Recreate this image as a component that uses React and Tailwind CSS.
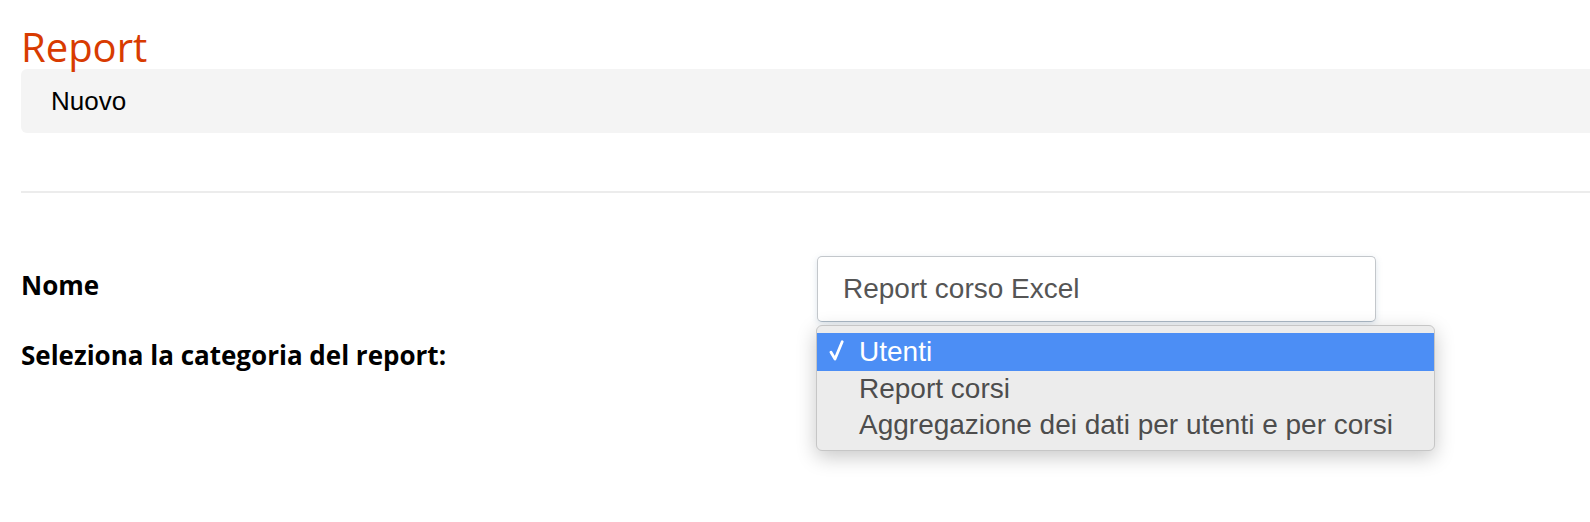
export default function App() {
  return (
    <div className="min-h-[522px] w-[1590px] overflow-hidden bg-white pl-[21px] pt-[25px]" style={{ fontFamily: '"Open Sans", sans-serif' }}>
      <h1 className="text-[40px] leading-[44px] font-normal text-[#d83b01]">Report</h1>
      <div className="flex h-[64px] items-center rounded-l-[6px] bg-[#f4f4f4] pl-[30px]">
        <span className="text-[26px] text-black" style={{ fontFamily: '"Liberation Sans", Arial, sans-serif' }}>Nuovo</span>
      </div>
      <div className="mt-[58px] h-[2px] bg-[#ececec]" />

      <div className="mt-[63px] flex">
        <div className="w-[796px] pt-[13px] text-[26px] leading-[32px] font-bold text-black">Nome</div>
        <div
          className="flex h-[66px] w-[559px] items-center rounded-[5px] border border-[#c3c7cb] border-b-[#aab8c4] bg-white pl-[25px] text-[28px] text-[#555555] shadow-[0_2px_6px_rgba(120,150,180,0.25)]"
          style={{ fontFamily: '"Liberation Sans", Arial, sans-serif' }}
        >
          Report corso Excel
        </div>
      </div>

      <div className="mt-[17px] flex">
        <div className="w-[795px] text-[26px] leading-[32px] font-bold text-black">Seleziona la categoria del report:</div>
        <div className="relative h-[40px] w-[619px]">
          <div
            className="absolute left-0 top-[-14px] w-[619px] rounded-[6px] border border-[#c6c6c6] bg-[#ececec] pt-[7px] pb-[7px] text-[28px] text-[#4d4d4d] shadow-[0_6px_20px_rgba(0,0,0,0.22)]"
            style={{ fontFamily: '"Liberation Sans", Arial, sans-serif' }}
          >
            <div className="relative flex h-[38px] items-center bg-[#4c8ef5] pl-[42px] text-white">
              <svg className="absolute left-[12px] top-[7px]" width="15" height="21" viewBox="0 0 15 21" fill="none">
                <path d="M2 12.2 L6 19 L13.2 1.8" stroke="white" strokeWidth="2.8" strokeLinecap="round" strokeLinejoin="round" />
              </svg>
              Utenti
            </div>
            <div className="flex h-[36px] items-center pl-[42px]">Report corsi</div>
            <div className="flex h-[36px] items-center pl-[42px]">Aggregazione dei dati per utenti e per corsi</div>
          </div>
        </div>
      </div>
    </div>
  );
}
